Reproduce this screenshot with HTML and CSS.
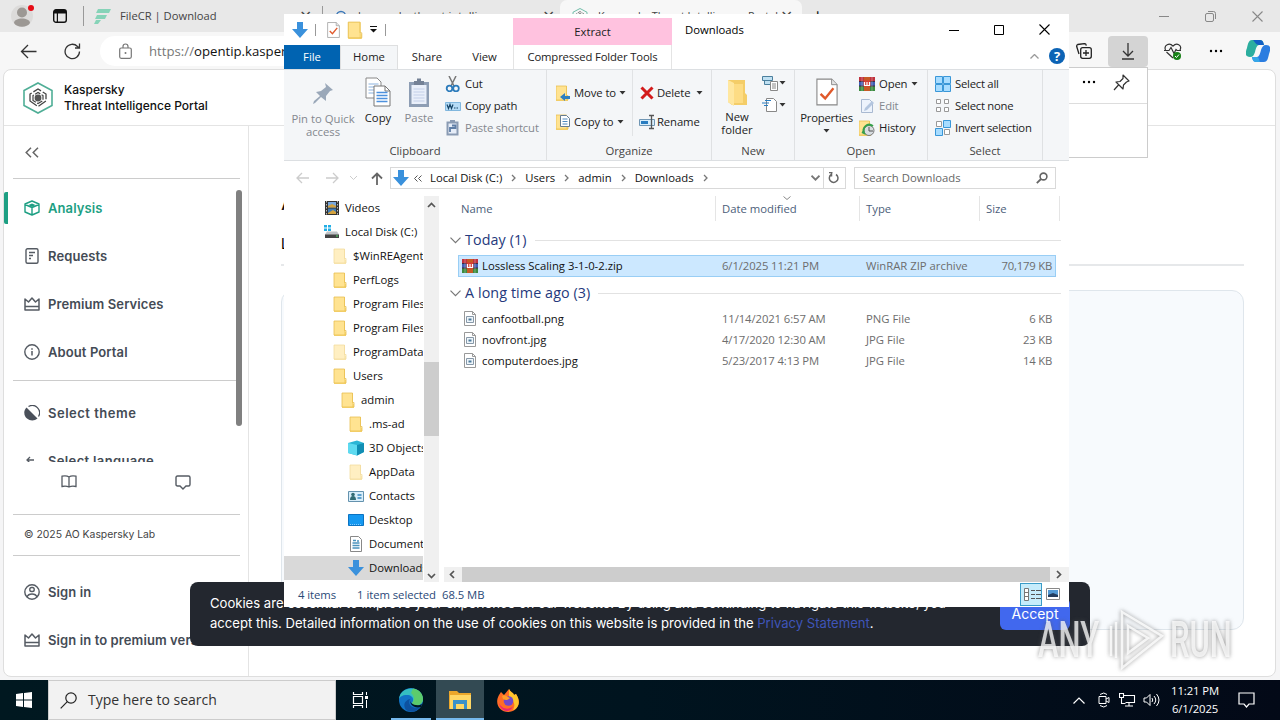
FILE: index.html
```html
<!DOCTYPE html>
<html lang="en">
<head>
    <meta charset="UTF-8">
    <meta name="viewport" content="width=device-width, initial-scale=1.0">
    <title>Downloads</title>
    <link rel="stylesheet" href="styles.css">
</head>
<body>
<!-- shared icons -->
<svg class="sprite">
    <symbol id="folder" viewBox="0 0 16 16"><path d="M2 1h11v10l1 1v4H2z" fill="#f8d775"/><path d="M2 1h10v14H2z" fill="#ffe391"/><path d="M2 15V1h10.500V10.500h1.500V15z" fill="none" stroke="#e8bf52" stroke-width=".8"/></symbol>
    <symbol id="down" viewBox="0 0 16 16"><path d="M5 0h6v7h5l-8 9-8-9h5z" fill="#3a91dc"/></symbol>
    <symbol id="caret" viewBox="0 0 7 4"><path d="M0.500 0h6L3.500 3.500z" fill="#333"/></symbol>
    <symbol id="doccheck" viewBox="0 0 24 30"><path d="M1 1h16l6 6v22H1z" fill="#fff" stroke="#888" stroke-width="1.200"/><path d="M17 1v6h6" fill="#e4e4e4" stroke="#888"/><path d="M5 17l5 5 9-11" fill="none" stroke="#e0592b" stroke-width="2.600"/></symbol>
    <symbol id="rar" viewBox="0 0 16 16"><path d="M0 1h16v5H0z" fill="#c0323e"/><path d="M0 6h16v4H0z" fill="#3f5fb5"/><path d="M0 10h16v5H0z" fill="#3b8b3f"/><path d="M0 5.500h16M0 10h16" stroke="#432b45"/><path d="M5 1h6v14H5z" fill="#c65a25"/><path d="M4.500 4.500h7v6h-7z" fill="#d63e35"/><path d="M5.500 6v3.500h5V6M8 6v3" fill="none" stroke="#fff" stroke-width="1.200"/><path d="M3 1v14M13 1v14" stroke="#eee" stroke-opacity=".35"/></symbol>
    <symbol id="pic" viewBox="0 0 12 15"><path d="M.500.500h8l3 3v11H.500z" fill="#fff" stroke="#999"/><path d="M8.500.500v3h3" fill="none" stroke="#999"/><path d="M2.500 5.500h7v6h-7z" fill="#eef5fa" stroke="#8798a8"/><path d="M4.500 7.500h3v2h-3z" fill="#4b799b"/></symbol>
    <symbol id="crown" viewBox="0 0 16 14"><path d="M1 2l3.500 3L8 1l3.500 4L15 2v11H1zM1 9.500h14" fill="none" stroke="#555b63" stroke-width="1.500" stroke-linejoin="round"/></symbol>
    <symbol id="chev" viewBox="0 0 5 8"><path d="M1 1l3 3-3 3" fill="none" stroke="#777" stroke-width="1.300"/></symbol>
    <symbol id="kasp" viewBox="0 0 30 32"><path d="M15 1l14 7.500v15L15 31 1 23.500v-15z" fill="none" stroke="#4fae96" stroke-width="1.600"/><path d="M7 19v-7l8-5 8 5v7l-8 5.500z" fill="none" stroke="#444" stroke-width="1.300" stroke-dasharray="9 2"/><path d="M10 18.500v-5l5-3 5 3v5l-5 3z" fill="none" stroke="#444" stroke-width="1.200" stroke-dasharray="6 1.500"/><circle cx="15" cy="16" r="3.400" fill="#555"/></symbol>
    <symbol id="dots" viewBox="0 0 14 4"><circle cx="2" cy="2" r="1.200"/><circle cx="7" cy="2" r="1.200"/><circle cx="12" cy="2" r="1.200"/></symbol>
</svg>

<div class="browser">
    <div class="tabs">
        <div class="avatar"><svg width="24" height="24" viewBox="0 0 24 24"><circle cx="11" cy="12" r="11" fill="#dcdbda"/><circle cx="11" cy="8.500" r="5" fill="#9c9894"/><path d="M3 19c0-6 16-6 16 0-3 5-13 5-16 0z" fill="#9c9894"/><circle cx="20" cy="4" r="3" fill="#e60c16"/></svg></div>
        <svg class="workspace" width="14" height="14" viewBox="0 0 14 14"><rect x=".7" y=".7" width="12.600" height="12.600" rx="2.300" fill="none" stroke="#111" stroke-width="1.400"/><path d="M1 1h12v3.500H5V13H3.800V4.500H1z" fill="#111"/></svg>
        <div class="tab tab-one"><svg width="17" height="17" viewBox="0 0 17 17"><path d="M4 1h13l-2 4H2zM3 7h10l-2 4H1zM2 12h5l-3 4H0z" fill="#86d3b8"/></svg><span>FileCR | Download</span><i>×</i></div>
        <div class="tab tab-two"><svg width="12" height="12" viewBox="0 0 12 12"><circle cx="6" cy="6" r="4.500" fill="none" stroke="#3c78b8" stroke-width="1.500"/></svg><span>kaspersky threat intelligence</span><i>×</i></div>
        <div class="tab tab-three"><svg width="16" height="16"><use href="#kasp"/></svg><span>Kaspersky Threat Intelligence Portal</span><i>×</i></div>
        <div class="newtab">+</div>
        <div class="win-btns">
            <svg width="10" height="10" viewBox="0 0 10 10"><path d="M0 5.500h10" stroke="#888"/></svg>
            <svg width="11" height="11" viewBox="0 0 11 11"><rect x=".5" y="2.500" width="8" height="8" rx="1.500" fill="none" stroke="#888"/><path d="M3 .5h5.500q2 0 2 2V8" fill="none" stroke="#888"/></svg>
            <svg width="11" height="11" viewBox="0 0 11 11"><path d="M.5.500l10 10M10.500.500l-10 10" stroke="#888" stroke-width="1.100"/></svg>
        </div>
    </div>
    <div class="toolbar">
        <svg class="back" width="17" height="15" viewBox="0 0 17 15"><path d="M16.500 7.500H1.500M8 1L1.500 7.500 8 14" fill="none" stroke="#333" stroke-width="1.300"/></svg>
        <svg class="reload" width="17" height="17" viewBox="0 0 17 17"><path d="M15.500 8.500a7.200 7.200 0 1 1-2-5L15.500 5M15.500 .5V5H11" fill="none" stroke="#333" stroke-width="1.300"/></svg>
        <div class="address">
            <svg width="13" height="16" viewBox="0 0 13 16"><rect x=".7" y="5" width="11.600" height="10.300" rx="1.500" fill="none" stroke="#777" stroke-width="1.200"/><path d="M4 5V3.500a2.500 2.500 0 0 1 5 0V5" fill="none" stroke="#777" stroke-width="1.200"/><circle cx="6.500" cy="10" r="1" fill="#777"/></svg>
            <span class="url"><em>https://</em>opentip.kaspersky.com</span>
        </div>
        <svg class="collect" width="16" height="16" viewBox="0 0 16 16"><rect x="4.700" y="4.700" width="10.600" height="10.600" rx="2" fill="none" stroke="#222" stroke-width="1.300"/><path d="M10 7v6M7 10h6M3 11L.7 3.500q-.2-1.500 1-2L8.500.600q1.500 0 1.800 2" fill="none" stroke="#222" stroke-width="1.300"/></svg>
        <div class="dl-btn"><svg width="14" height="17" viewBox="0 0 14 17"><path d="M7 0v13M2 8l5 5 5-5M1 16h12" fill="none" stroke="#333" stroke-width="1.300"/></svg></div>
        <svg class="heart" width="18" height="17" viewBox="0 0 18 17"><path d="M9 15L2.500 9M1.500 7C-.5 2 5.500-.8 9 3.200 12.500-.8 18.500 2 16 7M0 7.500h5l2-3 3 6 2-4 1 1h4" fill="none" stroke="#333" stroke-width="1.200"/><circle cx="13" cy="13" r="4" fill="#178017"/><path d="M11 13l1.500 1.500 2.500-3" stroke="#fff" fill="none"/></svg>
        <svg class="more" width="14" height="4"><use href="#dots"/></svg>
        <svg class="copilot" width="24" height="22" viewBox="0 0 24 22"><path d="M6 0h8c3 0 3.500 3 4 5h-5c-2 0-3 3-4 7-1 3-2 5-5 5-5 0-5-4-3-9C2 3 3 0 6 0z" fill="#2cae9f"/><path d="M7 0h7c3 0 3.500 3 4 5h-5C10 5 9 2 7 0z" fill="#125fc4"/><path d="M18 22h-8c-3 0-3.500-3-4-5h5c2 0 3-3 4-7 1-3 2-5 5-5 5 0 5 4 3 9-1 5-2 8-5 8z" fill="#2b7de0"/><path d="M14 22h-4c-3 0-3.500-3-4-5h5c2 0 2 3 3 5z" fill="#35a7e8"/></svg>
    </div>
    <div class="page">
        <div class="page-head">
            <svg width="30" height="32"><use href="#kasp"/></svg>
            <div class="brand">Kaspersky<br>Threat Intelligence Portal</div>
        </div>
        <div class="page-body">
            <div class="sidebar">
                <div class="collapse"><svg width="14" height="11" viewBox="0 0 14 11"><path d="M6 .7L1.200 5.500 6 10.300M13 .7L8.200 5.500 13 10.300" fill="none" stroke="#666" stroke-width="1.500"/></svg></div>
                <ul class="menu">
                    <li class="active"><svg width="16" height="16" viewBox="0 0 16 16"><path d="M8 1l7 3v8l-7 3-7-3V4zM1 4.500l7 3 7-3M8 7.500V15" fill="none" stroke="#1d9f83" stroke-width="1.400" stroke-linejoin="round"/><path d="M4.500 5L8 3.500 11.500 5 8 7z" fill="#1d9f83"/></svg>Analysis</li>
                    <li><svg width="16" height="16" viewBox="0 0 16 16"><rect x="2" y=".7" width="12" height="14.600" rx="1.500" fill="none" stroke="#555b63" stroke-width="1.400"/><path d="M5 4.500h6M5 7.500h4M5 10.500h2" stroke="#555b63" stroke-width="1.300"/></svg>Requests</li>
                    <li><svg width="16" height="14"><use href="#crown"/></svg>Premium Services</li>
                    <li><svg width="16" height="16" viewBox="0 0 16 16"><circle cx="8" cy="8" r="7.200" fill="none" stroke="#555b63" stroke-width="1.400"/><path d="M8 7v4.500M8 4.300v1.500" stroke="#555b63" stroke-width="1.500"/></svg>About Portal</li>
                </ul>
                <ul class="menu menu-two">
                    <li><svg width="16" height="16" viewBox="0 0 16 16"><path d="M2.500 2.500C-1 6 0 11 3 13.500s7.500 2.500 10.500 0z" fill="#4a505a"/><path d="M4.500 1.500a7.300 7.300 0 0 1 10 10" fill="none" stroke="#4a505a" stroke-width="1.200"/></svg>Select theme</li>
                    <li class="lang"><svg width="16" height="16" viewBox="0 0 16 16"><path d="M10 7H3M6 4L3 7l3 3" fill="none" stroke="#555b63" stroke-width="1.300"/></svg>Select language</li>
                </ul>
                <div class="side-icons">
                    <svg width="16" height="13" viewBox="0 0 16 13"><path d="M8 2C6 .5 3 .8 1 1.200v10.300C3 11 6 11 8 12c2-1 5-1 7-.5V1.200C13 .8 10 .5 8 2v10" fill="none" stroke="#555b63" stroke-width="1.300"/></svg>
                    <svg width="16" height="15" viewBox="0 0 16 15"><path d="M2.500 1h11q1.500 0 1.500 1.500v7q0 1.500-1.500 1.500H11l-3 3-3-3H2.500Q1 11 1 9.500v-7Q1 1 2.500 1z" fill="none" stroke="#555b63" stroke-width="1.400"/></svg>
                </div>
                <div class="copy">© 2025 AO Kaspersky Lab</div>
                <ul class="menu menu-sign">
                    <li><svg width="16" height="16" viewBox="0 0 16 16"><circle cx="8" cy="8" r="7.200" fill="none" stroke="#555b63" stroke-width="1.400"/><rect x="5.800" y="3.500" width="4.400" height="4" rx="1.800" fill="none" stroke="#555b63" stroke-width="1.400"/><path d="M3 13c1.500-4 8.500-4 10 0" fill="none" stroke="#555b63" stroke-width="1.400"/></svg>Sign in</li>
                    <li><svg width="16" height="14"><use href="#crown"/></svg>Sign in to premium version</li>
                </ul>
                <div class="side-thumb"></div>
            </div>
            <div class="main">
                <h1>Analysis</h1>
                <div class="subtabs">Lookup</div>
                <div class="drop"></div>
            </div>
        </div>
    </div>
</div>

<div class="dl-panel">
    <div class="dl-head"><svg width="14" height="4"><use href="#dots"/></svg><svg width="17" height="17" viewBox="0 0 17 17"><path d="M10 1l6 6-2.500 1-3 3-.5 4-7-7 4-.5 3-3zM5.500 11L1 16" fill="none" stroke="#333" stroke-width="1.200" stroke-linejoin="round"/></svg></div>
</div>

<div class="cookie">
    <p>Cookies are essential to improve your experience on our website. By using and continuing to navigate this website, you<br><span>accept this. Detailed information on the use of cookies on this website is provided in the <a>Privacy Statement</a>.</span></p>
    <div class="accept">Accept</div>
</div>

<div class="explorer">
    <div class="titlebar">
        <div class="quick">
            <svg width="16" height="16"><use href="#down"/></svg><b></b>
            <svg class="q-doc" width="13" height="16"><use href="#doccheck"/></svg>
            <svg class="q-folder" width="18" height="18"><use href="#folder"/></svg>
            <svg class="q-caret" width="7" height="7" viewBox="0 0 7 7"><path d="M0 .5h7" stroke="#111"/><path d="M0 3h7L3.500 6.500z" fill="#111"/></svg><b></b>
        </div>
        <div class="extract">Extract</div>
        <div class="title">Downloads</div>
        <div class="win-btns dark">
            <svg width="10" height="10" viewBox="0 0 10 10"><path d="M0 5.500h10" stroke="#000"/></svg>
            <svg width="10" height="10" viewBox="0 0 10 10"><path d="M.5.500h9v9h-9z" fill="none" stroke="#000"/></svg>
            <svg width="11" height="11" viewBox="0 0 11 11"><path d="M.5.500l10 10M10.500.500l-10 10" stroke="#000" stroke-width="1.100"/></svg>
        </div>
    </div>
    <div class="rtabs">
        <div class="file">File</div><div class="home">Home</div><div class="share">Share</div><div class="view">View</div><div class="tools">Compressed Folder Tools</div>
        <svg class="up" width="9" height="5" viewBox="0 0 9 5"><path d="M.5 4.500l4-4 4 4" fill="none" stroke="#999" stroke-width="1.300"/></svg>
        <div class="help">?</div>
    </div>
    <div class="ribbon">
        <div class="group clipboard">
            <div class="items">
                <div class="big dim pin"><svg width="22" height="22" viewBox="0 0 22 22"><path d="M13 1l8 7-3 1-4 5v5l-5-4-6 6-2 1 1-3 6-5-4-4 5-1 5-4z" fill="#9aa8b9"/></svg><span>Pin to Quick<br>access</span></div>
                <div class="big copybtn"><svg width="26" height="30" viewBox="0 0 26 30"><path d="M1 1h11l4 4v16H1z" fill="#fff" stroke="#888"/><path d="M3.500 7h10M3.500 10h10M3.500 13h10M3.500 16h10" stroke="#8bb2de"/><path d="M9 9h11l5 5v15H9z" fill="#fff" stroke="#777"/><path d="M20 9v5h5" fill="none" stroke="#777"/><path d="M11.500 15.500h11M11.500 18.500h11M11.500 21.500h11M11.500 24.500h11" stroke="#4d91dd" stroke-width="1.500"/></svg><span>Copy</span></div>
                <div class="big dim paste"><svg width="22" height="30" viewBox="0 0 22 30"><path d="M1 4h20v25H1z" fill="#8d9db4"/><path d="M3.500 7h15v19h-15z" fill="#e9effa"/><path d="M5.500 11h11M5.500 14h11M5.500 17h11M5.500 20h11M5.500 23h11" stroke="#c3cfe8"/><path d="M6 3h3V.5h4V3h3v4H6z" fill="#748196"/></svg><span>Paste</span></div>
                <ul class="small">
                    <li><svg width="16" height="16" viewBox="0 0 16 16"><path d="M4 0l5 10M11 0L6 10" stroke="#777" stroke-width="1.500"/><circle cx="4.500" cy="12.500" r="2.800" fill="none" stroke="#2c7bbb" stroke-width="1.800"/><circle cx="11" cy="12.500" r="2.800" fill="none" stroke="#2c7bbb" stroke-width="1.800"/></svg>Cut</li>
                    <li><svg width="16" height="16" viewBox="0 0 16 16"><path d="M.5 4.500h15v8H.500z" fill="#b6dcf7" stroke="#81b7de"/><path d="M2 6.500l1.500 4L5 6.500l1.500 4L8 6.500M9 10h1.500M11.500 10H13" fill="none" stroke="#174668" stroke-width="1.200"/></svg>Copy path</li>
                    <li class="dim"><svg width="16" height="16" viewBox="0 0 16 16"><path d="M2.500 2.500h10v12h-10z" fill="#e6edf8" stroke="#8a9bb3" stroke-width="2"/><path d="M5 0h5v3H5z" fill="#8a9bb3"/><path d="M5 12V8h5M7 5.500h3.500V9" fill="none" stroke="#5f7ea6" stroke-width="1.800"/></svg>Paste shortcut</li>
                </ul>
            </div>
            <div class="label">Clipboard</div>
        </div>
        <div class="group organize">
            <div class="items">
                <ul class="mid mid-l">
                    <li><svg width="16" height="16" viewBox="0 0 16 16"><use href="#folder" x="-2" width="16" height="16"/><path d="M14 11H9V8l-5 4 5 4v-2h5z" fill="#2f7fbf"/></svg>Move to<svg class="car"><use href="#caret"/></svg></li>
                    <li><svg width="16" height="16" viewBox="0 0 16 16"><use href="#folder" x="-2" width="16" height="16"/><path d="M4.500 1.500h6l3 3v8h-9z" fill="#fff" stroke="#667d91"/><path d="M6.500 5h5M6.500 7.500h5M6.500 10h5" stroke="#4f8ac0"/></svg>Copy to<svg class="car"><use href="#caret"/></svg></li>
                </ul>
                <ul class="mid mid-r">
                    <li><svg width="16" height="16" viewBox="0 0 16 16"><path d="M2.500 2.500l11 11M13.500 2.500l-11 11" stroke="#d31b1b" stroke-width="3"/></svg>Delete<svg class="car"><use href="#caret"/></svg></li>
                    <li><svg width="16" height="16" viewBox="0 0 16 16"><path d="M.5 5.500h15v6H.500z" fill="#d7edfb" stroke="#7096b4"/><path d="M2 7h7v3H2z" fill="#287cc0"/><path d="M10 1.500h5M10 14.500h5M12.500 2v12" stroke="#555" stroke-width="1.300"/></svg>Rename</li>
                </ul>
            </div>
            <div class="label">Organize</div>
        </div>
        <div class="group new">
            <div class="items">
                <div class="big"><svg width="24" height="28" viewBox="0 0 24 28"><path d="M3 2h17v13l2 2v10H7L3 24z" fill="#f4cd68"/><path d="M3 2l6 3v23l-6-4z" fill="#ffe79f"/><path d="M9 6h9v19H9z" fill="#fddc84"/></svg><span>New<br>folder</span></div>
                <div class="newcol">
                    <span><svg width="16" height="16" viewBox="0 0 16 16"><path d="M.5 1.500h10v4h-10zM2.500 5.500h7v4h-7z" fill="#bfe0f2" stroke="#4b7f9d"/><path d="M8.500 6.500h7v9h-7zM10 9h4M10 11h4M10 13h4" fill="#fff" stroke="#888"/></svg><svg class="car"><use href="#caret"/></svg></span>
                    <span><svg width="16" height="16" viewBox="0 0 16 16"><path d="M4.500 1.500h7l3 3v10h-10z" fill="#fff" stroke="#888"/><path d="M3 3.500h6M0 6h7M2 8.500h4" stroke="#287cc0" stroke-width="1.200"/></svg><svg class="car"><use href="#caret"/></svg></span>
                </div>
            </div>
            <div class="label">New</div>
        </div>
        <div class="group open">
            <div class="items">
                <div class="big"><svg width="22" height="30"><use href="#doccheck"/></svg><span>Properties<br><svg class="car"><use href="#caret"/></svg></span></div>
                <ul class="small">
                    <li><svg width="16" height="16"><use href="#rar"/></svg>Open<svg class="car"><use href="#caret"/></svg></li>
                    <li class="dim"><svg width="16" height="16" viewBox="0 0 16 16"><path d="M2.500 1.500h8l3 3v10h-11z" fill="#edf3fc" stroke="#a9b9d1"/><path d="M5 13l1-3 7-7 2 2-7 7z" fill="#b4c6df"/></svg>Edit</li>
                    <li><svg width="16" height="16" viewBox="0 0 16 16"><use href="#folder" x="-2" width="16" height="16"/><circle cx="10" cy="10.500" r="5" fill="#d8dde0" stroke="#777"/><path d="M10 7v4h4" fill="none" stroke="#555"/><path d="M14 6c-6-4-11 2-9 7l-2-1" fill="none" stroke="#36a04a" stroke-width="2"/></svg>History</li>
                </ul>
            </div>
            <div class="label">Open</div>
        </div>
        <div class="group select">
            <div class="items">
                <ul class="small">
                    <li><svg width="16" height="16" viewBox="0 0 16 16"><path d="M.5.500h7v7h-7zM8.500.500h7v7h-7zM.5 8.500h7v7h-7zM8.500 8.500h7v7h-7z" fill="#a7dcff" stroke="#3997d8"/></svg>Select all</li>
                    <li><svg width="16" height="16" viewBox="0 0 16 16"><path d="M1.500 1.500h4v4h-4zM9.500 1.500h4v4h-4zM1.500 9.500h4v4h-4zM9.500 9.500h4v4h-4z" fill="#fff" stroke="#999"/></svg>Select none</li>
                    <li><svg width="16" height="16" viewBox="0 0 16 16"><path d="M1.500 1.500h5v5h-5zM9.500 9.500h5v5h-5z" fill="#fff" stroke="#999"/><path d="M8.500.500h7v7h-7zM.5 8.500h7v7h-7z" fill="#a7dcff" stroke="#3997d8"/></svg>Invert selection</li>
                </ul>
            </div>
            <div class="label">Select</div>
        </div>
    </div>
    <div class="navbar">
        <svg width="13" height="12" viewBox="0 0 13 12"><path d="M13 6H1M6 1L1 6l5 5" fill="none" stroke="#ccc" stroke-width="1.300"/></svg>
        <svg class="fwd" width="13" height="12" viewBox="0 0 13 12"><path d="M0 6h12M7 1l5 5-5 5" fill="none" stroke="#ccc" stroke-width="1.300"/></svg>
        <svg class="hist" width="7" height="4" viewBox="0 0 7 4"><path d="M0 0l3.500 3.500L7 0" fill="none" stroke="#ccc"/></svg>
        <svg class="upb" width="12" height="13" viewBox="0 0 12 13"><path d="M6 13V1.500M1 6.500l5-5 5 5" fill="none" stroke="#666" stroke-width="1.800"/></svg>
        <div class="path">
            <svg width="16" height="16"><use href="#down"/></svg>
            <svg class="laq" width="8" height="7" viewBox="0 0 8 7"><path d="M3.500 .5l-3 3 3 3M7.500 .5l-3 3 3 3" fill="none" stroke="#555"/></svg>
            <span class="c1">Local Disk (C:)</span><svg class="chev"><use href="#chev"/></svg>
            <span class="c2">Users</span><svg class="chev"><use href="#chev"/></svg>
            <span class="c3">admin</span><svg class="chev"><use href="#chev"/></svg>
            <span class="c4">Downloads</span><svg class="chev"><use href="#chev"/></svg>
            <svg class="drop-ar" width="9" height="6" viewBox="0 0 9 6"><path d="M.5 .7l4 4 4-4" fill="none" stroke="#777" stroke-width="1.800"/></svg>
            <div class="refresh"><svg width="11" height="12" viewBox="0 0 11 12"><path d="M8 2.500A4.300 4.300 0 1 1 3 2.700M4.500.500H1M3.500 .5v4" fill="none" stroke="#666" stroke-width="1.500"/></svg></div>
        </div>
        <div class="search">Search Downloads<svg width="12" height="12" viewBox="0 0 12 12"><circle cx="7.500" cy="4.500" r="3.400" fill="none" stroke="#666" stroke-width="1.600"/><path d="M5 7L.8 11.200" stroke="#666" stroke-width="1.800"/></svg></div>
    </div>
    <div class="content">
        <ul class="tree">
            <li class="l0"><svg width="16" height="16" viewBox="0 0 16 16"><path d="M1 1h14v14H1z" fill="#333"/><path d="M4 2h8v5.500H4z" fill="#78a7dc"/><path d="M4 8.500h8V14H4z" fill="#3d79b5"/><path d="M4 6l4-2 4 2v1.500H4zM4 13l5-3 3 2v2H4z" fill="#d4a23d"/><path d="M2.500 1v14M13.500 1v14" stroke="#bbb" stroke-dasharray="1.500 1.500"/></svg>Videos</li>
            <li class="l0"><svg width="16" height="16" viewBox="0 0 16 16"><path d="M0 1h3v2.500H0zM4 1h3v2.500H4zM0 4.500h3V7H0zM4 4.500h3V7H4z" fill="#22aee5"/><path d="M3 7.500h10l2 3v3H1v-3z" fill="#bfc3c6"/><path d="M1 10.500h14V14H1z" fill="#444"/><path d="M12 12h2" stroke="#4ce268"/></svg>Local Disk (C:)</li>
            <li class="l1 faint"><svg width="16" height="16"><use href="#folder"/></svg>$WinREAgent</li>
            <li class="l1"><svg width="16" height="16"><use href="#folder"/></svg>PerfLogs</li>
            <li class="l1"><svg width="16" height="16"><use href="#folder"/></svg>Program Files</li>
            <li class="l1"><svg width="16" height="16"><use href="#folder"/></svg>Program Files (x86)</li>
            <li class="l1 faint"><svg width="16" height="16"><use href="#folder"/></svg>ProgramData</li>
            <li class="l1"><svg width="16" height="16"><use href="#folder"/></svg>Users</li>
            <li class="l2"><svg width="16" height="16"><use href="#folder"/></svg>admin</li>
            <li class="l3"><svg width="16" height="16"><use href="#folder"/></svg>.ms-ad</li>
            <li class="l3"><svg width="16" height="16" viewBox="0 0 16 16"><path d="M0 3l9-2.500L16 3v9l-7 3.500L0 13z" fill="#2bb5d5"/><path d="M0 3l9 2v10.500L0 13z" fill="#5edaf0"/><path d="M9 5l7-2v9l-7 3.500z" fill="#118eb4"/></svg>3D Objects</li>
            <li class="l3 faint"><svg width="16" height="16"><use href="#folder"/></svg>AppData</li>
            <li class="l3"><svg width="16" height="16" viewBox="0 0 16 16"><path d="M.5 3.500h15v10H.500z" fill="#d9eefa" stroke="#6492ae"/><circle cx="5" cy="6.500" r="1.800" fill="#326b73"/><path d="M2 12q0-4 3-4t3 4z" fill="#326b73"/><path d="M9.500 7h4M9.500 10h4" stroke="#3486bd" stroke-width="1.300"/></svg>Contacts</li>
            <li class="l3"><svg width="16" height="16" viewBox="0 0 16 16"><path d="M.5 2.500h15v11H.500z" fill="#1599f1" stroke="#0b73c2"/><path d="M2 12.500h12" stroke="#84cbff" stroke-dasharray="1 1"/></svg>Desktop</li>
            <li class="l3"><svg width="16" height="16" viewBox="0 0 16 16"><path d="M2.500.500h8l3 3v12h-11z" fill="#fff" stroke="#888"/><path d="M5 4.500h3M4.500 7h7M4.500 9.500h7M4.500 12h7M9 5h2" stroke="#4b93bd" stroke-width="1.400"/></svg>Documents</li>
            <li class="l3 sel"><svg width="16" height="16"><use href="#down"/></svg>Downloads</li>
        </ul>
        <div class="vscroll">
            <svg width="9" height="6" viewBox="0 0 9 6"><path d="M1 5l3.500-3.500L8 5" fill="none" stroke="#555" stroke-width="1.700"/></svg>
            <div class="thumb"></div>
            <svg class="vdown" width="9" height="6" viewBox="0 0 9 6"><path d="M1 1l3.500 3.500L8 1" fill="none" stroke="#555" stroke-width="1.700"/></svg>
        </div>
        <div class="files">
            <div class="row head"><span class="name">Name</span><span class="date">Date modified<svg width="8" height="5" viewBox="0 0 8 5"><path d="M.5.500l3.500 3 3.500-3" fill="none" stroke="#888"/></svg></span><span class="type">Type</span><span class="size">Size</span></div>
            <div class="gr gr-one"><svg width="11" height="7" viewBox="0 0 11 7"><path d="M.5.700l5 5 5-5" fill="none" stroke="#777" stroke-width="1.200"/></svg>Today (1)<hr></div>
            <div class="row zip"><svg width="16" height="16"><use href="#rar"/></svg><span class="name">Lossless Scaling 3-1-0-2.zip</span><span class="date">6/1/2025 11:21 PM</span><span class="type">WinRAR ZIP archive</span><span class="size">70,179 KB</span></div>
            <div class="gr gr-two"><svg width="11" height="7" viewBox="0 0 11 7"><path d="M.5.700l5 5 5-5" fill="none" stroke="#777" stroke-width="1.200"/></svg>A long time ago (3)<hr></div>
            <div class="row"><svg width="16" height="15"><use href="#pic"/></svg><span class="name">canfootball.png</span><span class="date">11/14/2021 6:57 AM</span><span class="type">PNG File</span><span class="size">6 KB</span></div>
            <div class="row"><svg width="16" height="15"><use href="#pic"/></svg><span class="name">novfront.jpg</span><span class="date">4/17/2020 12:30 AM</span><span class="type">JPG File</span><span class="size">23 KB</span></div>
            <div class="row"><svg width="16" height="15"><use href="#pic"/></svg><span class="name">computerdoes.jpg</span><span class="date">5/23/2017 4:13 PM</span><span class="type">JPG File</span><span class="size">14 KB</span></div>
            <div class="hscroll">
                <svg width="6" height="9" viewBox="0 0 6 9"><path d="M5 1L1.500 4.500 5 8" fill="none" stroke="#555" stroke-width="1.700"/></svg>
                <div class="thumb"></div>
                <svg width="6" height="9" viewBox="0 0 6 9"><path d="M1 1l3.500 3.500L1 8" fill="none" stroke="#555" stroke-width="1.700"/></svg>
            </div>
        </div>
    </div>
    <div class="status">
        <span class="s1">4 items</span><span class="s2">1 item selected</span><span class="s3">68.5 MB</span>
        <div class="details"><svg width="17" height="14" viewBox="0 0 17 14"><path d="M.5.500h4v12h-4zM.5 4.500h4M.5 8.500h4" fill="#fff" stroke="#777"/><path d="M7 2.500h4M12 2.500h5M7 6.500h4M12 6.500h5M7 10.500h4M12 10.500h5" stroke="#555"/></svg></div>
        <svg class="thumbs" width="14" height="12" viewBox="0 0 14 12"><path d="M.5.500h13v11H.500z" fill="#fff" stroke="#888"/><path d="M2 2h10v7H2z" fill="#5298d3"/><path d="M2 7l5-2 5 2v2H2z" fill="#243d5e"/></svg>
    </div>
</div>

<div class="mark"><span>ANY</span>
    <svg width="60" height="64" viewBox="0 0 60 64"><path d="M16 4l40 24-40 32zM10 14v36M5 18v30M22 18l20 12-20 15z" fill="none" stroke="#fff" stroke-width="2.500" stroke-opacity=".8"/></svg>
    <span>RUN</span></div>

<div class="taskbar">
    <div class="start"><svg width="16" height="16" viewBox="0 0 16 16"><path d="M0 2l7-1v6.500H0zM8 1l8-1v7.500H8zM0 8.500h7V15l-7-1zM8 8.500h8V16l-8-1z" fill="#fff"/></svg></div>
    <div class="tsearch"><svg width="17" height="17" viewBox="0 0 17 17"><circle cx="11" cy="6" r="5.200" fill="none" stroke="#222" stroke-width="1.200"/><path d="M7.300 9.700L.7 16.300" stroke="#222" stroke-width="1.200"/></svg>Type here to search</div>
    <div class="app"><svg width="17" height="16" viewBox="0 0 17 16"><path d="M1.500 4.500h9v7h-9zM1.500 0v2.500h9V0M1.500 16v-2.500h9V16" fill="none" stroke="#fff" stroke-width="1.200"/><path d="M14.500 0v3M14.500 8v8" stroke="#fff"/><path d="M13 4h3v3h-3z" fill="#fff"/></svg></div>
    <div class="app edge"><svg width="24" height="24" viewBox="0 0 24 24"><circle cx="12" cy="12" r="12" fill="#1273c6"/><path d="M0 11C1-2 22-4 24 11c0 7-9 8-11 4 3-4 0-8-5-8S1 9 0 11z" fill="#35bfc1"/><path d="M14 0.500c7 1 10 6 10 10.500 0 7-9 8-11 4 4-5 1-8-1-10z" fill="#5ccb6c"/><path d="M11 11c-3 6 3 11 10 8-3 5-9 6-14 3-4-6 0-10 4-11z" fill="#0d519f"/><path d="M12 10c-3 5 3 8 9 7l2-1-1 3c-8 2-13-4-10-9z" fill="#001722"/></svg></div>
    <div class="app on"><svg width="22" height="19" viewBox="0 0 22 19"><path d="M0 0h8l2 2h12v16H0z" fill="#eba72b"/><path d="M1 4h21v14H1z" fill="#ffd765"/><path d="M4 9h14v9h-3v-5H7v5H4z" fill="#3b91c9"/></svg></div>
    <div class="app"><svg width="22" height="23" viewBox="0 0 22 23"><path d="M2 6l2-3 3 3 5-6c2 4 4 3 5 6l2-1c7 10 0 18-8 18S-3 15 2 6z" fill="#ff6c26"/><path d="M12 0c2 4 4 3 5 6l2-1c6 9 1 15-3 16 4-8-2-11-4-13z" fill="#ffc52c"/><path d="M2 14c4 8 12 6 14 3-2 7-12 7-14-3z" fill="#ed2572"/><circle cx="11.500" cy="12" r="4.800" fill="#7248cb"/><path d="M5 7c3-2 5 1 8 2-3 3-5 2-7 1z" fill="#ff9d28"/></svg></div>
    <div class="tray">
        <svg width="12" height="7" viewBox="0 0 12 7"><path d="M.5 6.500L6 1l5.500 5.500" fill="none" stroke="#fff" stroke-width="1.200"/></svg>
        <svg class="t2" width="12" height="16" viewBox="0 0 12 16"><path d="M1 4.500h7v7H1zM8 7l3-1.500v5L8 9M2 2.500q4-3 7 0M2 13.500q4 3 7 0" fill="none" stroke="#fff"/></svg>
        <svg class="t3" width="17" height="14" viewBox="0 0 17 14"><path d="M4.500 2.500h11v7h-9M10 9.500v3M6 13h8M.5.500h4v4h-4zM2.500 4.500v6h4" fill="none" stroke="#fff" stroke-width="1.100"/></svg>
        <svg class="t4" width="17" height="14" viewBox="0 0 17 14"><path d="M1 5h2.500L7 1.500v11L3.500 9H1zM9 5q1.500 2 0 4M11 3q3.500 4 0 8M13.500 1q5 6 0 12" fill="none" stroke="#fff"/></svg>
        <div class="clock">11:21 PM<br>6/1/2025</div>
        <svg class="t5" width="17" height="16" viewBox="0 0 17 16"><path d="M1 1h15v11h-5l-2.500 3L6 12H1z" fill="none" stroke="#fff" stroke-width="1.200"/></svg>
    </div>
</div>
</body>
</html>
```

FILE: styles.css
```css
*{padding: 0;margin: 0;box-sizing: border-box;}
body{width: 1280px;height: 720px;overflow: hidden;position: relative;display: flex;flex-direction: column;font: 11.3px/16px "Open Sans","Noto Sans",sans-serif;color: #222;}
ul{list-style: none;}
svg{flex: none;display: block;}
span,li,.title,.url{white-space: nowrap;}
.sprite{position: absolute;width: 0;height: 0;}

/* browser */
.browser{height: 680px;background: #f5f5f6;display: flex;flex-direction: column;}
.tabs{height: 32px;background: #e8e8e8;display: flex;align-items: center;}
.avatar{width: 53px;padding-left: 11px;}
.workspace{margin-right: 16px;}
.tab{display: flex;align-items: center;height: 20px;border-left: 1px solid #999;color: #444;}
.tab span{flex: 1;}
.tab i{font: 20px/16px "Open Sans",sans-serif;width: 17px;}
.tab-one{width: 239px;padding-left: 10px;}
.tab-one span{padding-left: 9px;font-size: 11.2px;}
.tab-one i{width: 22px;}
.tab-two{width: 238px;padding-left: 12px;}
.tab-two span{padding-left: 11px;}
.tab-three{width: 242px;height: 32px;padding: 0 4px 0 12px;background: #f7f7f7;border: 0;border-radius: 7px 7px 0 0;}
.tab-three span{padding-left: 10px;font-size: 10.800px;}
.newtab{width: 30px;padding-left: 10px;font-size: 20px;}
.win-btns{display: flex;align-items: center;gap: 36px;margin-left: auto;margin-right: 17px;}
.toolbar{height: 38px;background: #f7f7f7;display: flex;align-items: center;padding: 0 10px 0 20px;}
.reload{margin-left: 27px;}
.address{width: 950px;height: 30px;margin-left: 19px;margin-right: 1px;background: #fff;border-radius: 15px;display: flex;align-items: center;padding-left: 19px;}
.url{margin-left: 17px;font-size: 13.200px;color: #111;}
.url em{font-style: normal;color: #777;}
.collect{margin-left: 26px;}
.dl-btn{width: 40px;height: 31px;margin-left: 16px;background: #d4d4d4;border-radius: 4px;display: flex;align-items: center;justify-content: center;}
.heart{margin-left: 16px;}
.more{margin-left: 27px;}
.copilot{margin-left: 23px;}
.page{height: 608px;margin: -1px 4px 0 3px;background: #fff;border-radius: 8px;border: 1px solid #dedede;display: flex;flex-direction: column;}
.page-head{height: 56px;border-bottom: 1px solid #e4e4e4;padding-left: 19px;display: flex;align-items: center;}
.brand{margin-left: 11px;font: 500 12px/16px Inter,sans-serif;color: #111;}
.page-body{flex: 1;display: flex;min-height: 0;}
.sidebar{width: 245px;border-right: 1px solid #e4e4e4;padding: 0 8px 0 9px;position: relative;}
.collapse{height: 53px;border-bottom: 1px solid #ccc;display: flex;align-items: center;padding-left: 12px;}
.menu{padding: 5px 0 4px;}
.menu li{height: 48px;display: flex;align-items: center;gap: 8px;padding-left: 11px;padding-bottom: 1px;font: 600 13px/20px Inter,sans-serif;letter-spacing: .1px;color: #444b55;}
.menu .active{color: #1d9f83;border-left: 4px solid #1d9f83;height: 32px;margin: 8px 0 8px -9px;padding-left: 16px;border-radius: 2px;}
.menu-two{border-top: 1px solid #ccc;height: 82px;padding-top: 8px;overflow: hidden;}
.menu-two li{letter-spacing: .5px;}
.menu-two .lang{letter-spacing: .35px;}
.side-icons{height: 53px;display: flex;justify-content: space-between;padding: 13px 49px 0 48px;border-bottom: 1px solid #ccc;}
.copy{height: 41px;padding-left: 11px;border-bottom: 1px solid #ccc;font: 10.400px/39px Inter,sans-serif;color: #444;}
.menu-sign{padding-top: 12px;overflow: hidden;}
.side-thumb{position: absolute;left: 232px;top: 64px;width: 6px;height: 236px;border-radius: 3px;background: #808080;}
.main{flex: 1;padding: 62px 31px 0 32px;}
.main h1{font: 400 22px/28px Inter,sans-serif;color: #111;}
.main .subtabs{height: 50px;border-bottom: 2px solid #e6e8ea;font: 14px/56px Inter,sans-serif;color: #000;}
.main .drop{height: 340px;margin-top: 24px;background: #f7fafd;border: 1px solid #dfe6ec;border-radius: 12px;}
.dl-panel{position: absolute;left: 820px;top: 67px;width: 328px;height: 91px;background: #fff;border: 1px solid #ccc;}
.dl-head{height: 36px;border-bottom: 1px solid #ddd;display: flex;align-items: center;justify-content: flex-end;gap: 17px;padding: 0 17px 7px 0;}
.cookie{position: absolute;left: 190px;top: 582px;width: 900px;height: 64px;background: #23272f;border-radius: 8px;padding: 11px 20px;display: flex;justify-content: space-between;color: #fff;}
.cookie p{font: 13.100px/20px Inter,sans-serif;white-space: nowrap;}
.cookie a{color: #3f55b8;}
.accept{width: 70px;height: 32px;margin-top: 5px;background: #4168ee;border-radius: 6px;text-align: center;font: 14px/31px Inter,sans-serif;}

/* explorer window */
.explorer{position: absolute;left: 284px;top: 14px;width: 785px;height: 593px;background: #fff;display: flex;flex-direction: column;}
.titlebar{height: 31px;display: flex;align-items: center;}
.quick{width: 229px;display: flex;align-items: center;padding-left: 8px;}
.quick b{width: 1px;height: 12px;background: #999;margin-left: 7px;}
.q-doc{margin-left: 11px;}
.q-folder{margin-left: 6px;}
.q-caret{margin: 0 5px 0 6px;}
.q-caret + b{margin-left: 3px;}
.extract{width: 159px;height: 27px;margin-top: 4px;background: #ffc2df;text-align: center;line-height: 27px;}
.title{margin-left: 13px;color: #000;font-size: 11.300px;}
.dark{gap: 35px;margin-right: 19px;}
.rtabs{height: 24px;display: flex;align-items: stretch;line-height: 24px;text-align: center;}
.file{width: 56px;background: #0063b1;color: #fff;}
.home{width: 58px;background: #f4f6f8;border: 1px solid #dedfe0;border-bottom: 0;line-height: 22px;}
.share{width: 58px;}
.view{width: 57px;}
.tools{width: 159px;border: 1px solid #e4e4e4;border-width: 0 1px;letter-spacing: -.15px;}
.up{margin: 9px 10px 0 358px;}
.help{width: 16px;height: 16px;margin-top: 3px;border-radius: 8px;background: #0c63b5;color: #fff;font: 700 13px/16px "Open Sans",sans-serif;}
.ribbon{height: 92px;background: #f4f6f8;border: 1px solid #dcdfe2;border-width: 1px 0;display: flex;}
.group{border-right: 1px solid #dfe1e3;height: 90px;display: flex;flex-direction: column;}
.items{height: 72px;display: flex;}
.label{text-align: center;line-height: 18px;color: #444;}
.clipboard{width: 263px;}
.organize{width: 165px;}
.new{width: 83px;}
.open{width: 133px;}
.select{width: 115px;}
.big{display: flex;flex-direction: column;align-items: center;padding-top: 8px;line-height: 13px;text-align: center;}
.big span{margin-top: 4px;}
.pin{width: 78px;padding-top: 12px;}
.pin span{margin-top: 8px;}
.copybtn{width: 32px;padding-top: 7px;}
.paste{width: 50px;}
.paste span{margin-top: 3px;}
.dim{color: #84888f;}
.small{padding: 3px 0 0 1px;letter-spacing: -.15px;}
.small li{height: 22px;display: flex;align-items: center;gap: 4px;}
.car{width: 7px;height: 4px;margin-left: 3px;}
.mid{padding-top: 8px;letter-spacing: -.1px;}
.mid li{height: 29px;display: flex;align-items: center;gap: 2px;}
.mid-l{width: 86px;padding-left: 9px;border-right: 1px solid #e1e3e5;margin-bottom: 6px;}
.mid-l .car{margin-left: 1px;}
.mid-r{padding-left: 6px;}
.new .big{width: 50px;}
.newcol{padding-top: 5px;}
.newcol span{height: 22px;display: flex;align-items: flex-start;}
.newcol .car{margin: 6px 0 0 1px;}
.open .big{width: 63px;padding-top: 7px;letter-spacing: -.2px;}
.open .big .car{margin: 5px auto 0;}
.open .small .car{margin-left: 0;}
.select .small{padding-left: 7px;letter-spacing: -.25px;}
.navbar{height: 35px;display: flex;align-items: center;padding: 0 0 1px 12px;}
.fwd{margin-left: 17px;}
.hist{margin-left: 11px;}
.upb{margin-left: 14px;}
.path{width: 456px;height: 22px;margin-left: 7px;border: 1px solid #d9d9d9;display: flex;align-items: center;padding-left: 2px;color: #111;}
.laq{margin: 0 8px 0 5px;}
.chev{width: 5px;height: 8px;margin: 0 9px;}
.drop-ar{margin-left: auto;}
.refresh{width: 22px;height: 20px;margin-left: 3px;border-left: 1px solid #d9d9d9;padding: 4px 0 0 4px;}
.search{width: 202px;height: 22px;margin-left: 8px;border: 1px solid #d9d9d9;padding: 0 7px 0 8px;display: flex;align-items: center;justify-content: space-between;color: #666;}
.content{height: 386px;display: flex;}
.tree{width: 139px;overflow: hidden;color: #111;}
.tree li{height: 24px;display: flex;align-items: center;gap: 5px;padding-left: 40px;}
.tree .l1{padding-left: 48px;}
.tree .l2{padding-left: 56px;}
.tree .l3{padding-left: 64px;}
.tree .sel{background: #d9d9d9;}
.faint svg{opacity: .55;}
.vscroll{width: 15px;margin-left: 1px;background: #f0f0f0;display: flex;flex-direction: column;align-items: center;padding: 6px 0 3px;}
.vscroll .thumb{width: 15px;height: 74px;background: #cdcdcd;margin-top: 154px;}
.vdown{margin-top: auto;}
.files{width: 625px;margin-left: 5px;color: #6d6d6d;display: flex;flex-direction: column;}
.row{height: 21px;width: 598px;margin-left: 14px;display: flex;align-items: center;padding-left: 4px;}
.row span{flex: none;}
.row .name{width: 244px;padding-left: 4px;color: #111;}
.row .date{width: 144px;letter-spacing: -.1px;}
.row .type{width: 114px;}
.row .size{width: 72px;text-align: right;letter-spacing: -.2px;}
.head{height: 27px;width: 602px;padding: 0 0 2px;}
.head span{height: 25px;line-height: 26px;border-right: 1px solid #e5e5e5;position: relative;}
.row.head .name{width: 258px;color: #4c607a;padding-left: 3px;}
.row.head .date,.row.head .type,.row.head .size{padding-left: 6px;color: #4c607a;letter-spacing: 0;}
.row.head .type{width: 120px;}
.row.head .size{width: 80px;text-align: left;}
.head svg{position: absolute;left: 67px;top: 0;}
.gr{margin: 0 8px 0 6px;display: flex;align-items: center;gap: 4px;font-size: 14.300px;letter-spacing: .1px;color: #25397c;}
.gr hr{flex: 1;border: 0;border-top: 1px solid #e2e2e2;margin-left: 4px;}
.gr-one{height: 32px;padding-bottom: 0;padding-top: 2px;}
.gr-two{margin-top: 3px;height: 26px;margin-bottom: 2px;}
.zip{height: 22px;background: #cce8ff;border: 1px solid #99cef5;padding-left: 3px;}
.hscroll{margin-top: auto;height: 15px;background: #f0f0f0;display: flex;align-items: center;justify-content: space-between;padding: 0 7px 0 5px;}
.hscroll .thumb{width: 588px;height: 15px;background: #cdcdcd;}
.status{height: 25px;display: flex;align-items: center;color: #2a4977;padding-left: 14px;letter-spacing: -.05px;}
.s2{margin-left: 21px;}
.s3{margin-left: 6px;}
.details{width: 22px;height: 23px;margin-left: auto;background: #c6ecfb;border: 1px solid #3a9cc8;padding: 4px 0 0 3px;}
.thumbs{margin: 0 9px 2px 4px;}

/* watermark */
.mark{position: absolute;left: 1038px;top: 608px;width: 196px;height: 64px;display: flex;align-items: center;justify-content: space-between;color: rgba(255,255,255,.75);font: 500 50px/64px Roboto,sans-serif;filter: drop-shadow(0 0 2px rgba(90,90,90,.8));}
.mark span{width: 64px;transform: scaleX(.62);transform-origin: left;}

/* taskbar */
.taskbar{height: 40px;background: linear-gradient(90deg,#001820,#00141f 50%,#030917);display: flex;color: #fff;}
.start{width: 48px;display: flex;align-items: center;justify-content: center;}
.tsearch{width: 288px;background: #f2f2f2;border: 1px solid #ccc;display: flex;align-items: center;gap: 11px;padding-left: 11px;font-size: 14px;color: #333;}
.app{width: 48px;display: flex;align-items: center;justify-content: center;}
.edge{width: 40px;margin: 0 5px 0 7px;border-bottom: 2px solid #76b9ed;padding-top: 2px;}
.on{background: #334a53;box-shadow: inset 0 -2px #76b9ed;}
.tray{margin-left: auto;display: flex;align-items: center;padding-right: 25px;}
.t2{margin-left: 13px;}
.t3{margin-left: 9px;}
.t4{margin-left: 7px;}
.clock{width: 62px;margin-left: 4px;text-align: center;font-size: 11.300px;line-height: 18px;letter-spacing: -.1px;}
.t5{margin-left: 12px;}
```
